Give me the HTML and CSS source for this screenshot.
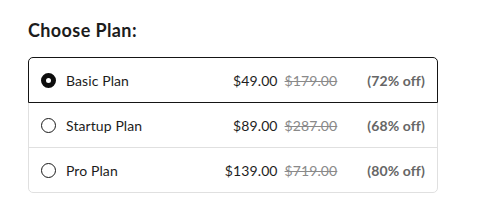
FILE: index.html
```html
<!DOCTYPE html>
<html>
<head>
<meta charset="utf-8">
<link rel="stylesheet" href="styles.css">
</head>
<body>
<div class="wrap">
  <h2 class="title">Choose Plan:</h2>
  <div class="plans">
    <label class="plan selected">
      <span class="radio"></span>
      <span class="name">Basic Plan</span>
      <span class="price">$49.00</span>
      <span class="old">$179.00</span>
      <span class="off">(72% off)</span>
    </label>
    <label class="plan">
      <span class="radio"></span>
      <span class="name">Startup Plan</span>
      <span class="price">$89.00</span>
      <span class="old">$287.00</span>
      <span class="off">(68% off)</span>
    </label>
    <label class="plan">
      <span class="radio"></span>
      <span class="name">Pro Plan</span>
      <span class="price">$139.00</span>
      <span class="old">$719.00</span>
      <span class="off">(80% off)</span>
    </label>
  </div>
</div>
</body>
</html>
```
FILE: styles.css
```css
* { box-sizing: border-box; }
html, body { margin: 0; background: #fff; }
body {
  font-family: "Lato", "Open Sans", sans-serif;
  color: #1c1c1c;
}
.wrap {
  padding: 20px 0 0 28px;
}
.title {
  margin: 0 0 16px 0;
  font-size: 18px;
  font-weight: 700;
  line-height: 21px;
  letter-spacing: 0.4px;
  color: #1c1c1c;
}
.plans {
  width: 410px;
  display: flex;
  flex-direction: column;
}
.plan {
  position: relative;
  display: flex;
  align-items: center;
  height: 46px;
  margin-top: -1px;
  padding: 0 12px 0 12px;
  border: 1px solid #e0e0e0;
  font-size: 14px;
  letter-spacing: 0.1px;
}
.plan:first-child { margin-top: 0; border-radius: 5px 5px 0 0; }
.plan:last-child { border-radius: 0 0 5px 5px; }
.plan.selected { border-color: #151515; z-index: 1; }
.radio {
  width: 15px;
  height: 15px;
  border-radius: 50%;
  border: 1.5px solid #1a1a1a;
  flex: none;
  margin-right: 10px;
}
.selected .radio { border: 5px solid #0d0d0d; }
.name { flex: 1; }
.price { color: #1e1e1e; }
.old {
  margin-left: 7px;
  color: #8a8a8a;
  text-decoration: line-through;
}
.off {
  margin-left: 30px;
  color: #666;
  font-weight: 700;
}
```
